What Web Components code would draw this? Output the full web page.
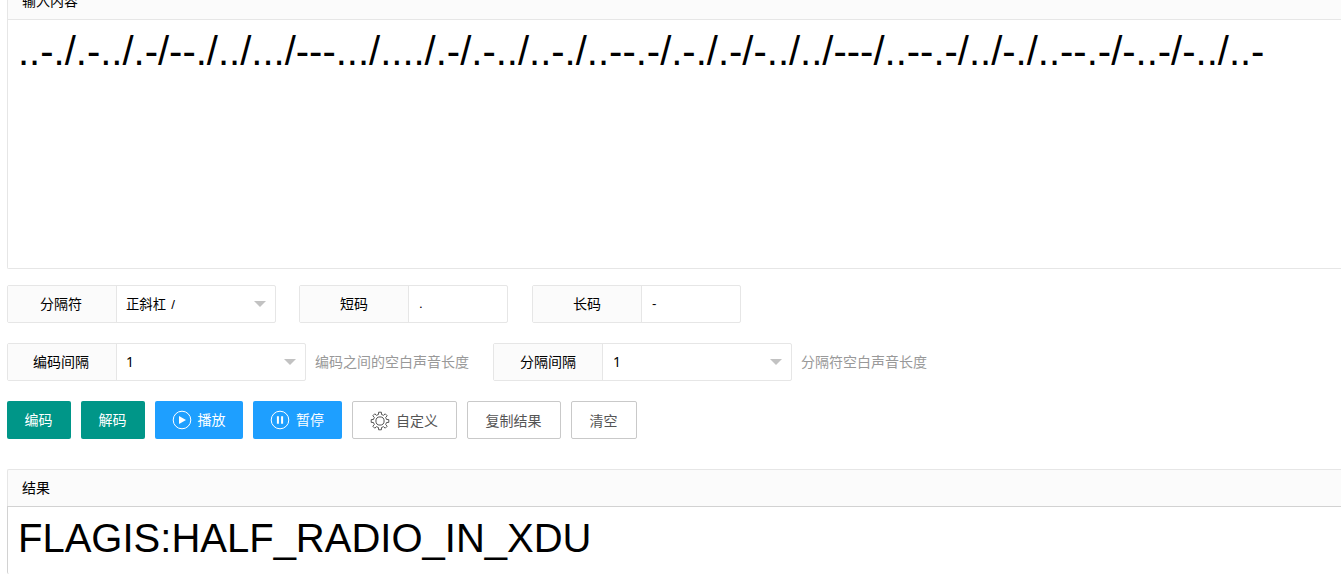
<!DOCTYPE html>
<html lang="zh-CN">
<head>
<meta charset="UTF-8">
<title>摩斯密码</title>
<style>
  html {
    overflow: hidden;
  }

  body {
    margin: 0;
    height: 574px;
    overflow: hidden;
    background: #fff;
    color: #000;
    font: 14px/20px "Liberation Sans", "Noto Sans CJK SC", sans-serif;
  }

  main {
    display: flex;
    flex-direction: column;
    height: 592px;
    padding-left: 7px;
    margin-top: -18px;
    overflow: hidden;
  }

  .row {
    display: flex;
    align-items: center;
  }

  .single { gap: 23px; margin-top: 16px; }
  .gaps { margin-top: 20px; }
  .actions { gap: 10px; margin-top: 20px; margin-bottom: 30px; }
</style>
</head>
<body>
<main>
  <text-panel heading="输入内容" style="--body-height: 248px">..-./.-../.-/--./../.../---.../..../.-/.-../..-./..--.-/.-./.-/-../../---/..--.-/../-./..--.-/-..-/-../..-</text-panel>

  <div class="row single">
    <form-field label="分隔符" select style="width: 269px; --value-size: 13.333px; --value-shift: 2px; --value-space: 1.5px">正斜杠 /</form-field>
    <form-field label="短码" style="width: 209px; --value-pad: 10px; --value-size: 13.333px; --label-pad: 0">.</form-field>
    <form-field label="长码" style="width: 209px; --value-pad: 10px; --value-size: 13.333px; --label-pad: 0; margin-left: 1px">-</form-field>
  </div>

  <div class="row gaps">
    <form-field label="编码间隔" select hint="编码之间的空白声音长度" style="--box-width: 299px; --value-font: 'Noto Sans'">1</form-field>
    <form-field label="分隔间隔" select hint="分隔符空白声音长度" style="--box-width: 299px; --value-pad: 10px; --value-font: 'Noto Sans'; --label-pad: 0; margin-left: 24px">1</form-field>
  </div>

  <div class="row actions">
    <tool-button style="width: 64px">编码</tool-button>
    <tool-button style="width: 64px">解码</tool-button>
    <tool-button kind="normal" icon="play" style="width: 88px">播放</tool-button>
    <tool-button kind="normal" icon="pause" style="width: 89px">暂停</tool-button>
    <tool-button kind="primary" icon="gear" style="width: 105px">自定义</tool-button>
    <tool-button kind="primary" style="width: 94px">复制结果</tool-button>
    <tool-button kind="primary" style="width: 66px">清空</tool-button>
  </div>

  <text-panel heading="结果" active style="--body-height: 67px; --body-bottom: 0">FLAGIS:HALF_RADIO_IN_XDU</text-panel>
</main>

<script>
class TextPanel extends HTMLElement {
  constructor() {
    super();
    this.attachShadow({ mode: 'open' });
  }

  connectedCallback() {
    this.shadowRoot.innerHTML = `
      <style>
        :host {
          display: block;
          --line: #e6e6e6;
        }

        :host([active]) {
          --line: #d2d2d2;
        }

        .head {
          box-sizing: border-box;
          height: 37px;
          padding: 8px 14px;
          border: 1px solid #e6e6e6;
          border-width: 1px 0 0 1px;
          border-radius: 2px 0 0 0;
          background: #fbfbfb;
        }

        .body {
          height: var(--body-height);
          padding-left: 10px;
          border: 1px solid var(--line);
          border-width: 1px 0 var(--body-bottom, 1px) 1px;
          border-radius: 0 0 0 2px;
          font-size: 40px;
          line-height: 62px;
          white-space: nowrap;
        }
      </style>
      <div class="head">${this.getAttribute('heading')}</div>
      <div class="body"><slot></slot></div>
    `;
  }
}

class FormField extends HTMLElement {
  constructor() {
    super();
    this.attachShadow({ mode: 'open' });
  }

  connectedCallback() {
    const hint = this.getAttribute('hint');
    const arrow = this.hasAttribute('select') ? '<i class="arrow"></i>' : '';

    this.shadowRoot.innerHTML = `
      <style>
        :host {
          display: flex;
          align-items: center;
        }

        .box {
          box-sizing: border-box;
          display: flex;
          width: var(--box-width, 100%);
          height: 38px;
          border: 1px solid #e6e6e6;
          border-radius: 2px;
          line-height: 36px;
        }

        .label {
          box-sizing: border-box;
          width: 109px;
          padding-right: var(--label-pad, 2px);
          border-right: 1px solid #e6e6e6;
          background: #fbfbfb;
          text-align: center;
        }

        .value {
          flex: 1;
          display: flex;
          align-items: center;
          justify-content: space-between;
          padding: 0 9px 0 var(--value-pad, 9px);
        }

        .text {
          padding-top: var(--value-shift, 0);
          font-family: var(--value-font, "Liberation Sans"), "Noto Sans CJK SC", sans-serif;
          font-size: var(--value-size, 14px);
          word-spacing: var(--value-space, 0);
        }

        .arrow {
          border: 6px solid transparent;
          border-top-color: #c2c2c2;
          border-bottom-width: 0;
        }

        .hint {
          margin-left: 9px;
          color: #999;
        }
      </style>
      <div class="box">
        <div class="label">${this.getAttribute('label')}</div>
        <div class="value"><span class="text"><slot></slot></span>${arrow}</div>
      </div>
      ${hint ? `<span class="hint">${hint}</span>` : ''}
    `;
  }
}

const icons = {
  play: `
    <circle cx="10" cy="10" r="8.8"/>
    <path d="M7 5.9 14 10l-7 4.1z" fill="currentColor" stroke="none"/>`,
  pause: `
    <circle cx="10" cy="10" r="8.8"/>
    <path d="M7.9 6.3v7.4M12.1 6.3v7.4" stroke-width="2"/>`
};

// Eight-toothed cog, built around the centre of the 20px box
function gearIcon() {
  const point = (radius, deg) => {
    const a = deg * Math.PI / 180;
    return `${(10 + radius * Math.cos(a)).toFixed(2)} ${(10 + radius * Math.sin(a)).toFixed(2)}`;
  };
  const points = [];
  for (let i = 0; i < 8; i++) {
    const mid = i * 45;
    points.push(point(6.7, mid - 13), point(8.9, mid - 9), point(8.9, mid + 9), point(6.7, mid + 13));
  }
  return `<path d="M${points.join('L')}Z" stroke-linejoin="round"/><circle cx="10" cy="10" r="4.1"/>`;
}

icons.gear = gearIcon();

class ToolButton extends HTMLElement {
  constructor() {
    super();
    this.attachShadow({ mode: 'open' });
  }

  connectedCallback() {
    const icon = icons[this.getAttribute('icon')];

    this.shadowRoot.innerHTML = `
      <style>
        :host {
          box-sizing: border-box;
          display: flex;
          align-items: center;
          justify-content: center;
          gap: 6px;
          height: 38px;
          padding-right: 1px;
          border-radius: 2px;
          background: #009688;
          color: #fff;
          white-space: nowrap;
          cursor: pointer;
        }

        :host([kind="normal"]) {
          background: #1e9fff;
        }

        :host([kind="primary"]) {
          padding-top: 2px;
          border: 1px solid #c9c9c9;
          background: #fff;
          color: #555;
        }

        svg {
          width: 20px;
          height: 20px;
          fill: none;
          stroke: currentColor;
          stroke-width: 1;
        }
      </style>
      ${icon ? `<svg viewBox="0 0 20 20">${icon}</svg>` : ''}
      <span><slot></slot></span>
    `;
  }
}

customElements.define('text-panel', TextPanel);
customElements.define('form-field', FormField);
customElements.define('tool-button', ToolButton);
</script>
</body>
</html>
